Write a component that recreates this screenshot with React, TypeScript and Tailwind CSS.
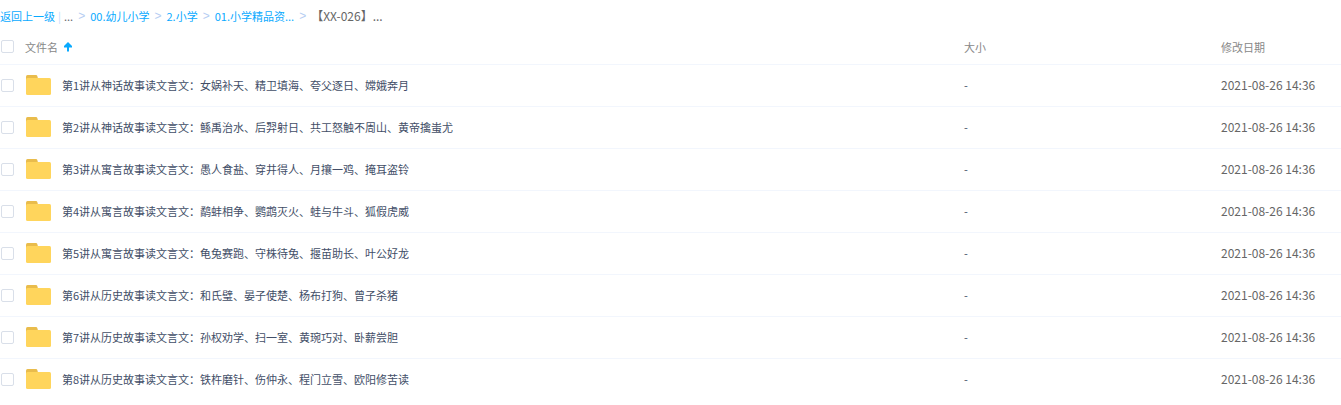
import React, { useState } from 'react'

const files = [
    { name: '第1讲从神话故事读文言文：女娲补天、精卫填海、夸父逐日、嫦娥奔月', date: '2021-08-26 14:36' },
    { name: '第2讲从神话故事读文言文：鲧禹治水、后羿射日、共工怒触不周山、黄帝擒蚩尤', date: '2021-08-26 14:36' },
    { name: '第3讲从寓言故事读文言文：愚人食盐、穿井得人、月攘一鸡、掩耳盗铃', date: '2021-08-26 14:36' },
    { name: '第4讲从寓言故事读文言文：鹬蚌相争、鹦鹉灭火、蛙与牛斗、狐假虎威', date: '2021-08-26 14:36' },
    { name: '第5讲从寓言故事读文言文：龟兔赛跑、守株待兔、揠苗助长、叶公好龙', date: '2021-08-26 14:36' },
    { name: '第6讲从历史故事读文言文：和氏璧、晏子使楚、杨布打狗、曾子杀猪', date: '2021-08-26 14:36' },
    { name: '第7讲从历史故事读文言文：孙权劝学、扫一室、黄琬巧对、卧薪尝胆', date: '2021-08-26 14:36' },
    { name: '第8讲从历史故事读文言文：铁杵磨针、伤仲永、程门立雪、欧阳修苦读', date: '2021-08-26 14:36' },
]

const crumbs = ['00.幼儿小学', '2.小学', '01.小学精品资...']

const FolderIcon = () => (
    <svg width="25" height="20" viewBox="0 0 25 20" className="shrink-0" aria-hidden="true">
        <path d="M0 1.5Q0 0 1.5 0H10Q11 0 11.3 1L12 3.5V7H0Z" fill="#e9bc4c" />
        <path d="M0 4.5Q0 3 1.5 3H23.5Q25 3 25 4.5V18.5Q25 20 23.5 20H1.5Q0 20 0 18.5Z" fill="#ffd55c" />
    </svg>
)

const SortIcon = () => (
    <svg width="8" height="10" viewBox="0 0 8 10" aria-hidden="true">
        <path d="M4 0L8 4V5.6H5V9.5H3V5.6H0V4Z" fill="#09aaff" />
    </svg>
)

const Separator = () => (
    <span className="px-[5px] font-['Liberation_Sans',sans-serif] text-xs text-[#b5cdf2]">&gt;</span>
)

const Checkbox = ({ label, checked, onChange }: { label: string; checked: boolean; onChange: () => void }) => (
    <input
        type="checkbox"
        aria-label={label}
        checked={checked}
        onChange={onChange}
        className="size-[13px] shrink-0 appearance-none rounded-xs border border-[#d9dfe9] bg-white checked:border-[#09aaff] checked:bg-[#09aaff]"
    />
)

const App = () => {
    const [selected, setSelected] = useState<number[]>([])

    const toggle = (index: number) => {
        setSelected(selected.includes(index) ? selected.filter((i) => i !== index) : [...selected, index])
    }

    const toggleAll = () => {
        setSelected(selected.length === files.length ? [] : files.map((_, i) => i))
    }

    return (
        <div className="bg-white font-['Noto_Sans_CJK_SC',sans-serif] text-[11px] text-[#424e67]">
            <nav className="flex h-[30px] items-center pt-0.5 whitespace-nowrap text-[#09aaff]">
                <a href="#">返回上一级</a>
                <span className="px-[3px] text-[#c4dbfe]">|</span>
                <span className="text-[#666]">...</span>
                {crumbs.map((crumb) => (
                    <React.Fragment key={crumb}>
                        <Separator />
                        <a href="#">{crumb}</a>
                    </React.Fragment>
                ))}
                <Separator />
                <span className="text-xs text-[#666]">【XX-026】...</span>
            </nav>
            <table className="w-full table-fixed text-left">
                <thead>
                    <tr className="h-[34px] border-b border-[#f2f6fd] text-[#888]">
                        <th className="font-normal">
                            <div className="flex items-center pl-px">
                                <Checkbox label="全选" checked={selected.length === files.length} onChange={toggleAll} />
                                <button className="ml-[11px] flex items-center gap-1.5">
                                    文件名
                                    <SortIcon />
                                </button>
                            </div>
                        </th>
                        <th className="w-[257px] font-normal">大小</th>
                        <th className="w-[120px] font-normal">修改日期</th>
                    </tr>
                </thead>
                <tbody>
                    {files.map((file, index) => (
                        <tr key={file.name} className="h-[42px] border-b border-[#f2f6fd] last:border-b-0">
                            <td>
                                <div className="flex items-center pl-px">
                                    <Checkbox label={file.name} checked={selected.includes(index)} onChange={() => toggle(index)} />
                                    <a href="#" className="ml-3 flex min-w-0 items-center gap-[11px]">
                                        <FolderIcon />
                                        <span className="truncate">{file.name}</span>
                                    </a>
                                </div>
                            </td>
                            <td>-</td>
                            <td className="text-xs text-[#666]">{file.date}</td>
                        </tr>
                    ))}
                </tbody>
            </table>
        </div>
    )
}

export default App
